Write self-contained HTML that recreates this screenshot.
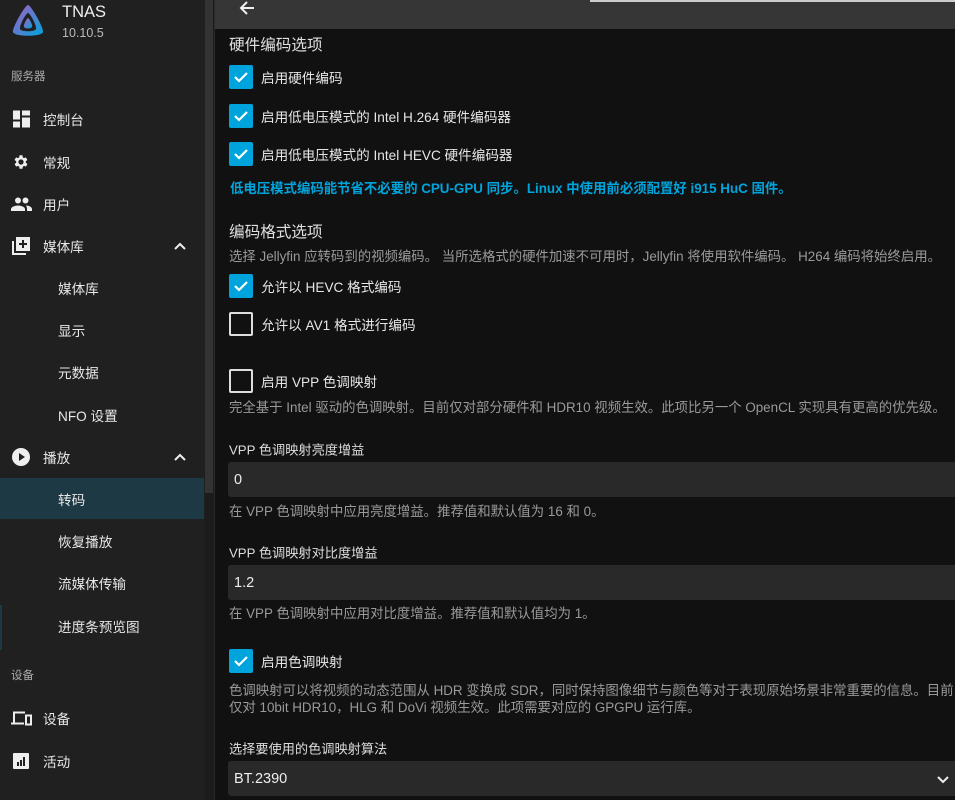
<!DOCTYPE html>
<html><head><meta charset="utf-8"><style>
*{margin:0;padding:0;box-sizing:border-box}
body{width:955px;height:800px;overflow:hidden;background:#111;font-family:"Liberation Sans","Noto Sans CJK SC",sans-serif;color:#ddd;position:relative}
.a{position:absolute;white-space:nowrap}
#side{position:absolute;left:0;top:0;width:205px;height:800px;background:#202020}
#sb{position:absolute;left:205px;top:0;width:9px;height:800px;background:#1c1c1c}
#thumb{position:absolute;left:205px;top:0;width:8px;height:493px;background:#333}
#vline{position:absolute;left:214px;top:0;width:1px;height:800px;background:#2a2a2a}
.it{font-size:13.6px;color:#e8e8e8;transform:translateY(-50%)}
.ic{position:absolute;transform:translateY(-50%)}
.sec{font-size:11.5px;color:#aaa;transform:translateY(-50%)}
.cb{position:absolute;left:229px;width:24px;height:24px;border-radius:2px;background:#00a4dc}
.cb svg{position:absolute;left:4px;top:4px}
.ucb{position:absolute;left:229px;width:24px;height:24px;border:2px solid #ddd;border-radius:2px}
.lb{font-size:13.6px;color:#e6e6e6;left:261px;transform:translateY(-50%)}
.h{font-size:15.6px;color:#e0e0e0;left:229px;transform:translateY(-50%)}
.d{font-size:13.4px;color:#9a9a9a;left:229px;transform:translateY(-50%)}
.fl{font-size:13.2px;color:#ddd;left:229px;transform:translateY(-50%)}
.inp{position:absolute;left:228px;width:727px;height:35px;background:#292929;border-radius:3px 0 0 3px}
.inp span{position:absolute;left:6px;top:50%;transform:translateY(-50%);font-size:14.5px;color:#eee}
</style></head><body>
<div id="side"></div>
<div id="sb"></div><div id="thumb"></div><div id="vline"></div>
<div class="a" style="left:0;top:478px;width:204px;height:41px;background:#1c3944"></div>
<div class="a" style="left:0;top:605px;width:2px;height:45px;background:#1c3944"></div>

<svg class="a" style="left:10px;top:4px" width="36" height="34" viewBox="0 0 36 34"><defs><linearGradient id="g" x1="0" y1="0" x2="1" y2="1"><stop offset="0" stop-color="#aa5cc3"/><stop offset="1" stop-color="#00a4dc"/></linearGradient></defs><path d="M18 1C15 1 2 24 3 28C4 33 32 33 33 28C34 24 21 1 18 1Z" fill="url(#g)"/><path d="M18 9C16 9 9 22 10 25C11 28 25 28 26 25C27 22 20 9 18 9Z" fill="#202020"/><path d="M18 14C17 14 13 21 14 23C15 25 21 25 22 23C23 21 19 14 18 14Z" fill="url(#g)"/></svg>
<div class="a" style="left:62px;top:3px;font-size:16.5px;color:#eee">TNAS</div>
<div class="a" style="left:62px;top:26px;font-size:12.5px;color:#bbb">10.10.5</div>

<div class="a sec" style="left:11px;top:76px">服务器</div>
<svg class="ic" style="left:13px;top:119px" width="17" height="17" viewBox="0 0 17 17" fill="#eee"><rect x="0" y="0" width="7" height="9"/><rect x="9" y="0" width="8" height="5"/><rect x="0" y="11" width="7" height="6"/><rect x="9" y="7" width="8" height="10"/></svg>
<div class="a it" style="left:43px;top:119px">控制台</div>
<svg class="ic" style="left:12px;top:162px" width="18" height="18" viewBox="0 0 24 24" fill="#eee"><path d="M19.4 13a7.5 7.5 0 0 0 0-2l2.1-1.6-2-3.5-2.5 1a7 7 0 0 0-1.7-1L15 3h-4l-.4 2.9a7 7 0 0 0-1.7 1l-2.5-1-2 3.5L6.6 11a7.5 7.5 0 0 0 0 2l-2.1 1.6 2 3.5 2.5-1a7 7 0 0 0 1.7 1L11 21h4l.4-2.9a7 7 0 0 0 1.7-1l2.5 1 2-3.5zM13 15.5a3.5 3.5 0 1 1 0-7 3.5 3.5 0 0 1 0 7z" transform="translate(-1 0)"/></svg>
<div class="a it" style="left:43px;top:162px">常规</div>
<svg class="ic" style="left:11px;top:204px" width="21" height="14" viewBox="0 0 21 14" fill="#eee"><circle cx="7" cy="3.5" r="3"/><circle cx="14.5" cy="3.5" r="3"/><path d="M0 14v-2c0-2 4-3.5 7-3.5s7 1.5 7 3.5v2z"/><path d="M15 8.5c3 0 6 1.5 6 3.5v2h-5v-2c0-1.3-.5-2.5-1-3.5z"/></svg>
<div class="a it" style="left:43px;top:204px">用户</div>
<svg class="ic" style="left:12px;top:246px" width="18" height="18" viewBox="0 0 18 18" fill="#eee"><path d="M0 4h2v12h12v2H0z"/><path d="M4 0h14v14H4zM10 3v3H7v2h3v3h2V8h3V6h-3V3z"/></svg>
<div class="a it" style="left:43px;top:246px">媒体库</div>
<svg class="ic" style="left:174px;top:246px" width="12" height="8" viewBox="0 0 12 8"><path d="M1 7l5-5 5 5" stroke="#eee" stroke-width="2" fill="none"/></svg>
<div class="a it" style="left:58px;top:288px">媒体库</div>
<div class="a it" style="left:58px;top:330px">显示</div>
<div class="a it" style="left:58px;top:372px">元数据</div>
<div class="a it" style="left:58px;top:415px">NFO 设置</div>
<svg class="ic" style="left:12px;top:457px" width="18" height="18" viewBox="0 0 18 18"><circle cx="9" cy="9" r="9" fill="#eee"/><path d="M7 5l6 4-6 4z" fill="#202020"/></svg>
<div class="a it" style="left:43px;top:457px">播放</div>
<svg class="ic" style="left:174px;top:457px" width="12" height="8" viewBox="0 0 12 8"><path d="M1 7l5-5 5 5" stroke="#eee" stroke-width="2" fill="none"/></svg>
<div class="a it" style="left:58px;top:499px">转码</div>
<div class="a it" style="left:58px;top:541px">恢复播放</div>
<div class="a it" style="left:58px;top:583px">流媒体传输</div>
<div class="a it" style="left:58px;top:626px">进度条预览图</div>
<div class="a sec" style="left:11px;top:675px">设备</div>
<svg class="ic" style="left:11px;top:718px" width="21" height="15" viewBox="0 0 21 15" fill="none" stroke="#eee" stroke-width="2"><path d="M3 12V2h11"/><path d="M0 13h13"/><rect x="15" y="5" width="5" height="9"/></svg>
<div class="a it" style="left:43px;top:718px">设备</div>
<svg class="ic" style="left:13px;top:761px" width="16" height="16" viewBox="0 0 16 16"><rect width="16" height="16" rx="1" fill="#eee"/><rect x="4" y="9" width="2" height="4" fill="#202020"/><rect x="7" y="7" width="2" height="6" fill="#202020"/><rect x="10" y="4" width="2" height="9" fill="#202020"/></svg>
<div class="a it" style="left:43px;top:761px">活动</div>

<div class="a" style="left:215px;top:0;width:740px;height:29px;background:#363636"></div>
<div class="a" style="left:590px;top:0;width:365px;height:2px;background:#ccc"></div>
<svg class="a" style="left:239px;top:1px" width="16" height="14" viewBox="0 0 16 14"><path d="M15 7H2M8 1L2 7l6 6" stroke="#eee" stroke-width="2" fill="none"/></svg>

<div class="a h" style="top:44px">硬件编码选项</div>
<div class="cb" style="top:65px"><svg width="16" height="16" viewBox="0 0 16 16"><path d="M2 8l4 4 8-8" stroke="#fff" stroke-width="2.2" fill="none"/></svg></div>
<div class="a lb" style="top:77px">启用硬件编码</div>
<div class="cb" style="top:104px"><svg width="16" height="16" viewBox="0 0 16 16"><path d="M2 8l4 4 8-8" stroke="#fff" stroke-width="2.2" fill="none"/></svg></div>
<div class="a lb" style="top:116px">启用低电压模式的 Intel H.264 硬件编码器</div>
<div class="cb" style="top:142px"><svg width="16" height="16" viewBox="0 0 16 16"><path d="M2 8l4 4 8-8" stroke="#fff" stroke-width="2.2" fill="none"/></svg></div>
<div class="a lb" style="top:154px">启用低电压模式的 Intel HEVC 硬件编码器</div>
<div class="a" style="left:230px;top:187px;transform:translateY(-50%);font-size:13.4px;font-weight:bold;color:#00a4dc">低电压模式编码能节省不必要的 CPU-GPU 同步。Linux 中使用前必须配置好 i915 HuC 固件。</div>

<div class="a h" style="top:231px">编码格式选项</div>
<div class="a d" style="top:255px">选择 Jellyfin 应转码到的视频编码。 当所选格式的硬件加速不可用时，Jellyfin 将使用软件编码。 H264 编码将始终启用。</div>
<div class="cb" style="top:274px"><svg width="16" height="16" viewBox="0 0 16 16"><path d="M2 8l4 4 8-8" stroke="#fff" stroke-width="2.2" fill="none"/></svg></div>
<div class="a lb" style="top:286px">允许以 HEVC 格式编码</div>
<div class="ucb" style="top:312px"></div>
<div class="a lb" style="top:324px">允许以 AV1 格式进行编码</div>
<div class="ucb" style="top:369px"></div>
<div class="a lb" style="top:381px">启用 VPP 色调映射</div>
<div class="a d" style="top:406px">完全基于 Intel 驱动的色调映射。目前仅对部分硬件和 HDR10 视频生效。此项比另一个 OpenCL 实现具有更高的优先级。</div>

<div class="a fl" style="top:449px">VPP 色调映射亮度增益</div>
<div class="inp" style="top:462px"><span>0</span></div>
<div class="a d" style="top:510px">在 VPP 色调映射中应用亮度增益。推荐值和默认值为 16 和 0。</div>
<div class="a fl" style="top:552px">VPP 色调映射对比度增益</div>
<div class="inp" style="top:565px"><span>1.2</span></div>
<div class="a d" style="top:612px">在 VPP 色调映射中应用对比度增益。推荐值和默认值均为 1。</div>

<div class="cb" style="top:649px"><svg width="16" height="16" viewBox="0 0 16 16"><path d="M2 8l4 4 8-8" stroke="#fff" stroke-width="2.2" fill="none"/></svg></div>
<div class="a lb" style="top:661px">启用色调映射</div>
<div class="a d" style="top:689px">色调映射可以将视频的动态范围从 HDR 变换成 SDR，同时保持图像细节与颜色等对于表现原始场景非常重要的信息。目前</div>
<div class="a d" style="top:706px">仅对 10bit HDR10，HLG 和 DoVi 视频生效。此项需要对应的 GPGPU 运行库。</div>
<div class="a fl" style="top:748px">选择要使用的色调映射算法</div>
<div class="inp" style="top:761px"><span>BT.2390</span></div>
<svg class="a" style="left:937px;top:776px" width="12" height="8" viewBox="0 0 12 8"><path d="M1 1l5 5 5-5" stroke="#eee" stroke-width="2" fill="none"/></svg>
</body></html>
